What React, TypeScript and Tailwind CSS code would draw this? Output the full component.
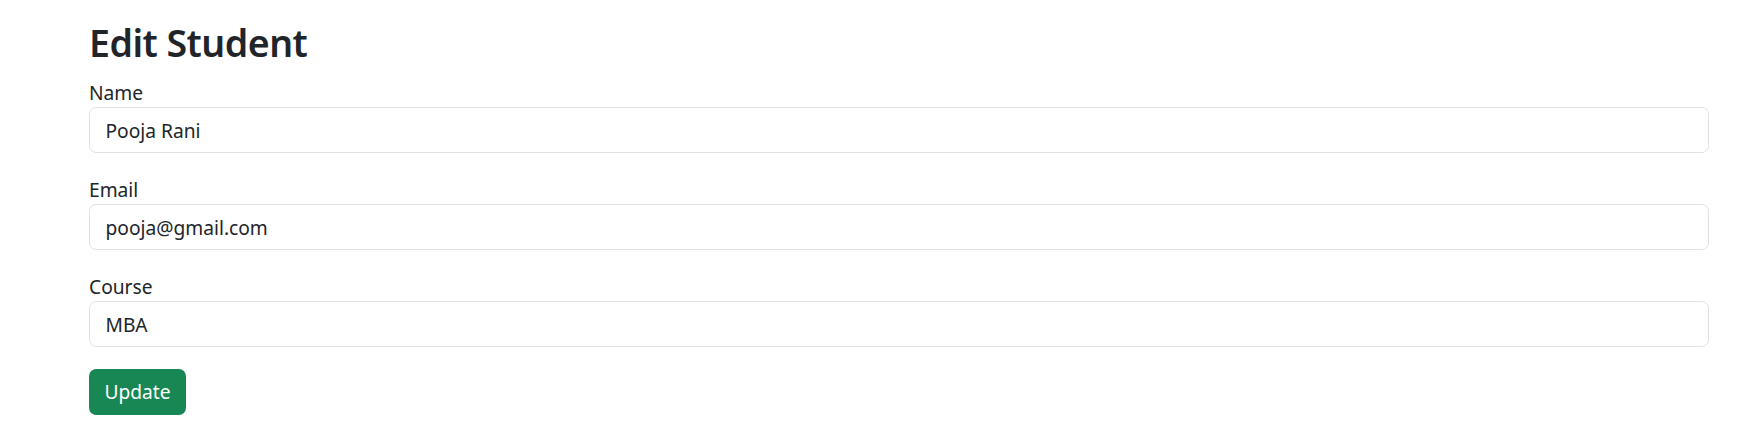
import React from "react";

const font = { fontFamily: '"Noto Sans", "Liberation Sans", sans-serif' };

function Field({ label, value }: { label: string; value: string }) {
  return (
    <div className="mb-[22px]">
      <label className="block text-[19.2px] leading-[29px] text-[#212529]">{label}</label>
      <input
        type="text"
        defaultValue={value}
        className="block w-full h-[46px] pl-[15.5px] pr-[14.4px] text-[19.2px] text-[#212529] bg-white border border-[#dee2e6] rounded-[7.2px] outline-none"
      />
    </div>
  );
}

export default function App() {
  return (
    <div className="min-h-screen bg-white" style={font}>
      <div className="pt-[20px] pl-[89px] pr-[47px]">
        <h2 className="text-[37.5px] leading-[46px] font-semibold tracking-[-0.5px] text-[#212529] mb-[12px]">
          Edit Student
        </h2>
        <form onSubmit={(e) => e.preventDefault()}>
          <Field label="Name" value="Pooja Rani" />
          <Field label="Email" value="pooja@gmail.com" />
          <Field label="Course" value="MBA" />
          <button
            type="submit"
            className="h-[46px] w-[97px] rounded-[7.2px] bg-[#198754] text-white text-[19.2px]"
          >
            Update
          </button>
        </form>
      </div>
    </div>
  );
}
